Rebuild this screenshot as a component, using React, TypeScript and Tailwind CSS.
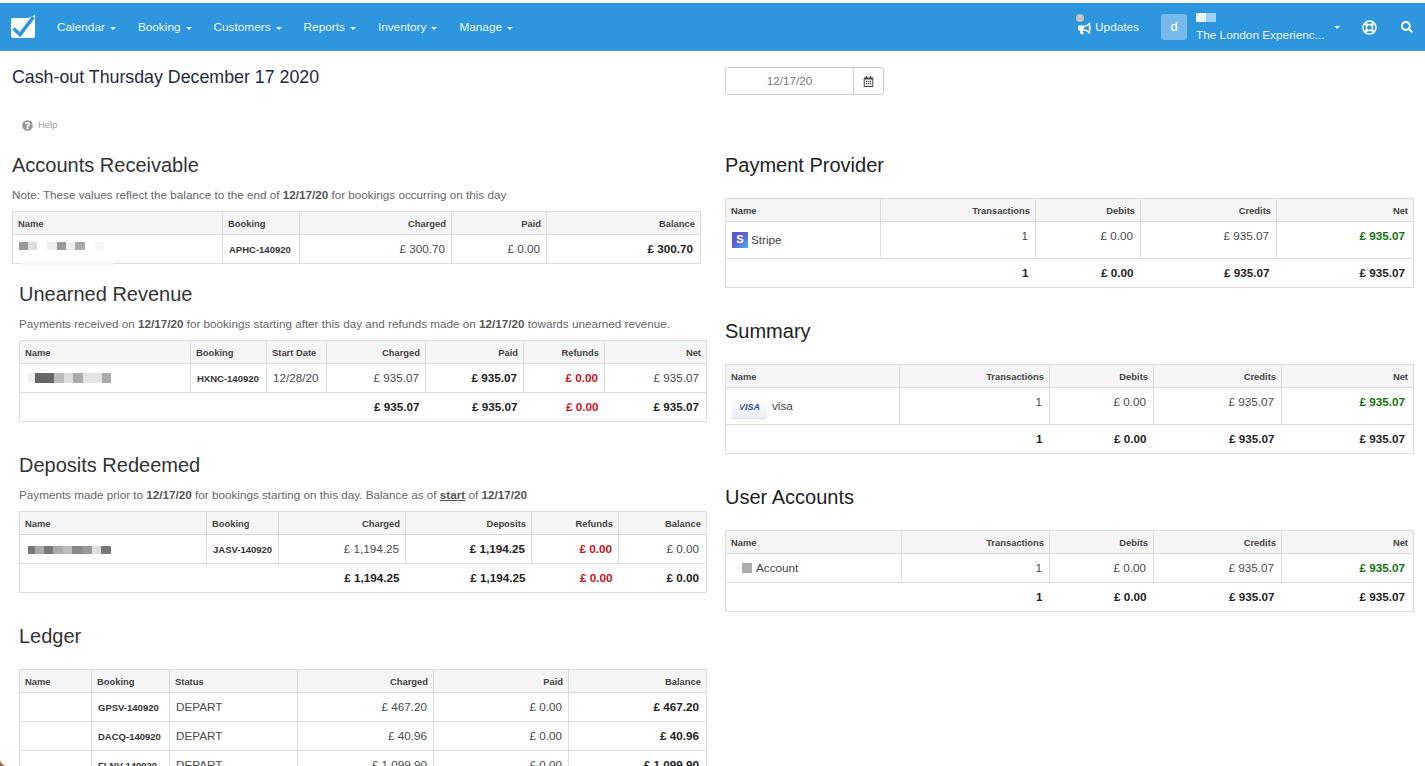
import type { ReactNode } from 'react';
import { FaBullhorn, FaQuestionCircle, FaRegCalendarAlt, FaRegLifeRing, FaSearch } from 'react-icons/fa';

type Col = { label: string; w: string; left?: boolean };
type Row = { h: string; cells: ReactNode[] };

const bold = (t: string) => <span className="font-bold text-[#222]">{t}</span>;
const red = (t: string) => <span className="font-bold text-[#c4121a]">{t}</span>;
const green = (t: string) => <span className="font-bold text-[#0c730c]">{t}</span>;
const code = (t: string) => <span className="whitespace-nowrap text-[9.5px] font-bold text-[#333]">{t}</span>;

function Caret() {
  return <span className="ml-[5px] inline-block border-x-[3px] border-t-[3px] border-x-transparent border-t-white/90" />;
}

function NavItem({ label }: { label: string }) {
  return (
    <div className="flex items-center pt-[2px] text-[11.8px] text-white/95">
      {label}
      <Caret />
    </div>
  );
}

function Logo() {
  return (
    <svg width="26" height="26" viewBox="0 0 26 26" className="ml-[10px]">
      <path d="M3 4h15l7-3v21a2 2 0 0 1-2 2H3a2 2 0 0 1-2-2V6a2 2 0 0 1 2-2z" fill="#fff" />
      <path d="M3.5 14.5L10 20.5L23.5 3" fill="none" stroke="#2d96df" strokeWidth="3.6" />
    </svg>
  );
}

function Blur({ bars, className }: { bars: [string, string][]; className: string }) {
  return (
    <div className={`flex ${className}`}>
      {bars.map(([w, bg], i) => (
        <div key={i} className={`${w} ${bg} h-full`} />
      ))}
    </div>
  );
}

function DataTable({
  cols,
  rows,
  total,
  className,
  wide,
}: {
  cols: Col[];
  rows: Row[];
  total?: ReactNode[];
  className: string;
  wide?: boolean;
}) {
  const pad = wide ? 'pr-[7px] last:pr-[8px]' : 'pr-[6px] last:pr-[7px]';
  return (
    <table className={`table-fixed border-collapse ${className}`}>
      <thead>
        <tr className="h-[23px]">
          {cols.map((c) => (
            <th
              key={c.label}
              className={`${c.w} ${c.left ? 'text-left' : 'text-right'} border border-[#dcdcdc] bg-[#f5f5f5] px-[5px] pt-[2px] pb-0 text-[9.4px] font-bold text-[#444]`}
            >
              {c.label}
            </th>
          ))}
        </tr>
      </thead>
      <tbody>
        {rows.map((r, i) => (
          <tr key={i} className={r.h}>
            {r.cells.map((c, j) => (
              <td
                key={j}
                className={`border border-[#dcdcdc] pl-[6px] pt-[5px] pb-0 align-top text-[11.7px] leading-[17px] text-[#4a4a4a] ${pad} ${cols[j].left ? 'text-left' : 'text-right'}`}
              >
                {c}
              </td>
            ))}
          </tr>
        ))}
        {total && (
          <tr className="h-[29px]">
            {total.map((c, j) => (
              <td
                key={j}
                className={`border-y border-[#dcdcdc] pl-[6px] pt-[5px] pb-0 align-top text-right text-[11.7px] leading-[17px] first:border-l last:border-r ${pad}`}
              >
                {c}
              </td>
            ))}
          </tr>
        )}
      </tbody>
    </table>
  );
}

const arCols: Col[] = [
  { label: 'Name', w: 'w-[210px]', left: true },
  { label: 'Booking', w: 'w-[77px]', left: true },
  { label: 'Charged', w: 'w-[152px]' },
  { label: 'Paid', w: 'w-[95px]' },
  { label: 'Balance', w: 'w-[154px]' },
];
const unearnedCols: Col[] = [
  { label: 'Name', w: 'w-[171px]', left: true },
  { label: 'Booking', w: 'w-[76px]', left: true },
  { label: 'Start Date', w: 'w-[60px]', left: true },
  { label: 'Charged', w: 'w-[99px]' },
  { label: 'Paid', w: 'w-[98px]' },
  { label: 'Refunds', w: 'w-[81px]' },
  { label: 'Net', w: 'w-[102px]' },
];
const depositCols: Col[] = [
  { label: 'Name', w: 'w-[187px]', left: true },
  { label: 'Booking', w: 'w-[72px]', left: true },
  { label: 'Charged', w: 'w-[127px]' },
  { label: 'Deposits', w: 'w-[126px]' },
  { label: 'Refunds', w: 'w-[87px]' },
  { label: 'Balance', w: 'w-[88px]' },
];
const ledgerCols: Col[] = [
  { label: 'Name', w: 'w-[72px]', left: true },
  { label: 'Booking', w: 'w-[78px]', left: true },
  { label: 'Status', w: 'w-[128px]', left: true },
  { label: 'Charged', w: 'w-[136px]' },
  { label: 'Paid', w: 'w-[135px]' },
  { label: 'Balance', w: 'w-[138px]' },
];
const providerCols: Col[] = [
  { label: 'Name', w: 'w-[155px]', left: true },
  { label: 'Transactions', w: 'w-[155px]' },
  { label: 'Debits', w: 'w-[105px]' },
  { label: 'Credits', w: 'w-[136px]' },
  { label: 'Net', w: 'w-[137px]' },
];
const summaryCols: Col[] = [
  { label: 'Name', w: 'w-[174px]', left: true },
  { label: 'Transactions', w: 'w-[150px]' },
  { label: 'Debits', w: 'w-[104px]' },
  { label: 'Credits', w: 'w-[128px]' },
  { label: 'Net', w: 'w-[132px]' },
];
const accountCols: Col[] = [
  { label: 'Name', w: 'w-[176px]', left: true },
  { label: 'Transactions', w: 'w-[148px]' },
  { label: 'Debits', w: 'w-[104px]' },
  { label: 'Credits', w: 'w-[128px]' },
  { label: 'Net', w: 'w-[132px]' },
];

const rightTotal = ['', bold('1'), bold('£ 0.00'), bold('£ 935.07'), bold('£ 935.07')];

function LeftHeading({ children }: { children: ReactNode }) {
  return <h2 className="h-[24px] text-[20px] leading-[24px] text-[#333]">{children}</h2>;
}

function RightHeading({ children }: { children: ReactNode }) {
  return <h2 className="h-[24px] text-[20px] leading-[24px] text-[#222]">{children}</h2>;
}

function Note({ children }: { children: ReactNode }) {
  return <p className="mt-[10px] h-[16px] whitespace-nowrap text-[11.7px] leading-[16px] text-[#666]">{children}</p>;
}

function B({ children }: { children: ReactNode }) {
  return <b className="font-bold text-[#555]">{children}</b>;
}

export default function App() {
  return (
    <div className="relative h-[766px] w-[1425px] overflow-hidden bg-white font-['Liberation_Sans',Arial,sans-serif]">
      <div className="mt-[3px] flex h-[48px] items-center bg-[#2d96df] shadow-[inset_0_-1px_0_#4f9bd4]">
        <Logo />
        <div className="ml-[21px] flex gap-[22px]">
          <NavItem label="Calendar" />
          <NavItem label="Booking" />
          <NavItem label="Customers" />
          <NavItem label="Reports" />
          <NavItem label="Inventory" />
          <NavItem label="Manage" />
        </div>
        <div className="relative ml-auto flex items-center pt-[2px] text-[11.8px] text-white/95">
          <span className="absolute left-[-2px] top-[-3px] h-[8px] w-[8px] rounded-full bg-[#c4c4c4]" />
          <FaBullhorn className="mr-[4px] text-[13px] text-white" />
          Updates
        </div>
        <div className="ml-[22px] flex h-[26px] w-[26px] items-center justify-center rounded-[3px] bg-white/35 text-[13px] text-white">d</div>
        <div className="ml-[9px] flex w-[133px] flex-col">
          <Blur className="mb-[6px] h-[9px]" bars={[['w-[10px]', 'bg-white/90'], ['w-[10px]', 'bg-white/55']]} />
          <div className="whitespace-nowrap text-[11.8px] leading-[14px] text-white/95">The London Experienc...</div>
        </div>
        <Caret />
        <FaRegLifeRing className="ml-[22px] text-[15px] text-white" />
        <FaSearch className="ml-[24px] mr-[12px] text-[12px] text-white" />
      </div>

      <div className="flex">
        <div className="w-[725px] pl-[12px]">
          <h1 className="mt-[16px] h-[20px] text-[17.8px] leading-[20px] text-[#1f2a3d]">Cash-out Thursday December 17 2020</h1>
          <div className="ml-[10px] mt-[30px] flex h-[16px] items-center text-[9.4px] text-[#999]">
            <FaQuestionCircle className="mr-[5px] text-[11px] text-[#999]" />
            Help
          </div>
          <div className="mt-[20px]">
            <LeftHeading>Accounts Receivable</LeftHeading>
            <Note>
              Note: These values reflect the balance to the end of <B>12/17/20</B> for bookings occurring on this day
            </Note>
            <DataTable
              className="mt-[8px] w-[688px]"
              cols={arCols}
              rows={[
                {
                  h: 'h-[29px]',
                  cells: [
                    <div className="relative h-[17px]">
                      <Blur
                        className="mt-[2px] h-[8px]"
                        bars={[
                          ['w-[9px]', 'bg-[#999]'],
                          ['w-[9px]', 'bg-[#ddd]'],
                          ['w-[10px]', 'bg-white'],
                          ['w-[10px]', 'bg-[#eee]'],
                          ['w-[9px]', 'bg-[#999]'],
                          ['w-[9px]', 'bg-[#eee]'],
                          ['w-[10px]', 'bg-[#aaa]'],
                          ['w-[10px]', 'bg-white'],
                          ['w-[9px]', 'bg-[#f5f5f5]'],
                        ]}
                      />
                      <div className="absolute left-[1px] top-[20px] h-[3px] w-[94px] bg-[#f4f4f4]" />
                    </div>,
                    code('APHC-140920'),
                    '£ 300.70',
                    '£ 0.00',
                    bold('£ 300.70'),
                  ],
                },
              ]}
            />
          </div>
          <div className="ml-[7px] mt-[18px]">
            <LeftHeading>Unearned Revenue</LeftHeading>
            <Note>
              Payments received on <B>12/17/20</B> for bookings starting after this day and refunds made on <B>12/17/20</B> towards unearned revenue.
            </Note>
            <DataTable
              className="mt-[8px] w-[687px]"
              cols={unearnedCols}
              rows={[
                {
                  h: 'h-[29px]',
                  cells: [
                    <Blur
                      className="mt-[4px] h-[10px]"
                      bars={[
                        ['w-[2px]', 'bg-white'],
                        ['w-[7px]', 'bg-[#eee]'],
                        ['w-[19px]', 'bg-[#666]'],
                        ['w-[10px]', 'bg-[#bbb]'],
                        ['w-[9px]', 'bg-[#ddd]'],
                        ['w-[10px]', 'bg-[#aaa]'],
                        ['w-[19px]', 'bg-[#e3e3e3]'],
                        ['w-[9px]', 'bg-[#aaa]'],
                      ]}
                    />,
                    code('HXNC-140920'),
                    '12/28/20',
                    '£ 935.07',
                    bold('£ 935.07'),
                    red('£ 0.00'),
                    '£ 935.07',
                  ],
                },
              ]}
              total={['', '', '', bold('£ 935.07'), bold('£ 935.07'), red('£ 0.00'), bold('£ 935.07')]}
            />
          </div>
          <div className="ml-[7px] mt-[31px]">
            <LeftHeading>Deposits Redeemed</LeftHeading>
            <Note>
              Payments made prior to <B>12/17/20</B> for bookings starting on this day. Balance as of <B><span className="underline">start</span></B> of <B>12/17/20</B>
            </Note>
            <DataTable
              className="mt-[8px] w-[687px]"
              cols={depositCols}
              rows={[
                {
                  h: 'h-[29px]',
                  cells: [
                    <Blur
                      className="mt-[6px] h-[8px]"
                      bars={[
                        ['w-[2px]', 'bg-white'],
                        ['w-[7px]', 'bg-[#777]'],
                        ['w-[9px]', 'bg-[#aaa]'],
                        ['w-[9px]', 'bg-[#777]'],
                        ['w-[10px]', 'bg-[#aaa]'],
                        ['w-[9px]', 'bg-[#bbb]'],
                        ['w-[10px]', 'bg-[#888]'],
                        ['w-[10px]', 'bg-[#999]'],
                        ['w-[9px]', 'bg-[#ddd]'],
                        ['w-[10px]', 'bg-[#777]'],
                      ]}
                    />,
                    code('JASV-140920'),
                    '£ 1,194.25',
                    bold('£ 1,194.25'),
                    red('£ 0.00'),
                    '£ 0.00',
                  ],
                },
              ]}
              total={['', '', bold('£ 1,194.25'), bold('£ 1,194.25'), red('£ 0.00'), bold('£ 0.00')]}
            />
          </div>
          <div className="ml-[7px] mt-[31px]">
            <LeftHeading>Ledger</LeftHeading>
            <DataTable
              className="mt-[21px] w-[687px]"
              cols={ledgerCols}
              rows={[
                { h: 'h-[29px]', cells: ['', code('GPSV-140920'), 'DEPART', '£ 467.20', '£ 0.00', bold('£ 467.20')] },
                { h: 'h-[29px]', cells: ['', code('DACQ-140920'), 'DEPART', '£ 40.96', '£ 0.00', bold('£ 40.96')] },
                { h: 'h-[29px]', cells: ['', code('FLNV-140920'), 'DEPART', '£ 1,099.90', '£ 0.00', bold('£ 1,099.90')] },
              ]}
            />
          </div>
        </div>

        <div className="w-[688px]">
          <div className="mt-[16px] flex h-[28px] w-[159px] rounded-[3px] border border-[#ccc]">
            <div className="flex flex-1 items-center justify-center text-[11.7px] text-[#777]">12/17/20</div>
            <div className="flex w-[30px] items-center justify-center border-l border-[#ccc]">
              <FaRegCalendarAlt className="text-[11px] text-[#444]" />
            </div>
          </div>
          <div className="mt-[58px]">
            <RightHeading>Payment Provider</RightHeading>
            <DataTable
              wide
              className="mt-[21px] w-[688px]"
              cols={providerCols}
              rows={[
                {
                  h: 'h-[37px]',
                  cells: [
                    <div className="flex items-center pt-[4px] text-[#444]">
                      <span className="mr-[3px] flex h-[16px] w-[16px] items-center justify-center bg-gradient-to-br from-[#5b4fc4] via-[#5a63d8] to-[#2fb8ea] text-[11px] font-bold text-white">S</span>
                      Stripe
                    </div>,
                    '1',
                    '£ 0.00',
                    '£ 935.07',
                    green('£ 935.07'),
                  ],
                },
              ]}
              total={rightTotal}
            />
          </div>
          <div className="mt-[31px]">
            <RightHeading>Summary</RightHeading>
            <DataTable
              wide
              className="mt-[21px] w-[688px]"
              cols={summaryCols}
              rows={[
                {
                  h: 'h-[37px]',
                  cells: [
                    <div className="flex items-start pt-[4px] text-[#444]">
                      <span className="mr-[5px] flex h-[21px] w-[35px] items-center justify-center rounded-[1px] bg-gradient-to-b from-white to-[#e8f0f6] pb-[1px] text-[9px] font-bold italic text-[#1a4f9c] shadow-[0_1px_1px_#ddd]">
                        <span className="bg-gradient-to-br from-[#e8a020] to-[#1a4f9c] to-60% bg-clip-text text-transparent">V</span>ISA
                      </span>
                      <span>visa</span>
                    </div>,
                    '1',
                    '£ 0.00',
                    '£ 935.07',
                    green('£ 935.07'),
                  ],
                },
              ]}
              total={rightTotal}
            />
          </div>
          <div className="mt-[31px]">
            <RightHeading>User Accounts</RightHeading>
            <DataTable
              wide
              className="mt-[21px] w-[688px]"
              cols={accountCols}
              rows={[
                {
                  h: 'h-[29px]',
                  cells: [
                    <div className="flex items-center pl-[10px] text-[#444]">
                      <span className="mr-[4px] h-[10px] w-[10px] bg-[#aaa]" />
                      Account
                    </div>,
                    '1',
                    '£ 0.00',
                    '£ 935.07',
                    green('£ 935.07'),
                  ],
                },
              ]}
              total={rightTotal}
            />
          </div>
        </div>
      </div>
      <svg className="absolute bottom-0 left-0" width="7" height="7" viewBox="0 0 7 7">
        <path d="M0 0A7 7 0 0 0 7 7H0z" fill="#8c6a3a" />
      </svg>
    </div>
  );
}
